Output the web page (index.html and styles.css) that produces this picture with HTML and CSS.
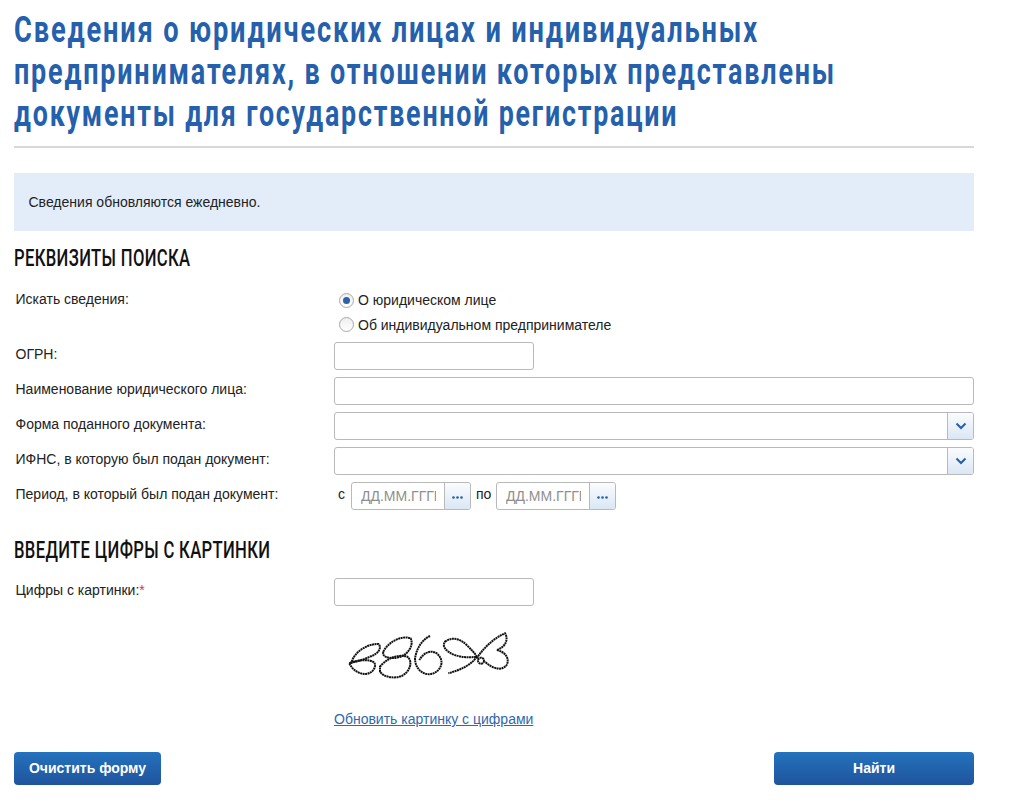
FILE: index.html
```html
<!DOCTYPE html>
<html lang="ru">
<head>
<meta charset="utf-8">
<title>Сведения о юридических лицах</title>
<link rel="stylesheet" href="styles.css">
</head>
<body>
<main class="page">
  <h1 class="title">
    <span class="title-line">Сведения о юридических лицах и индивидуальных</span>
    <span class="title-line title-line-2">предпринимателях, в отношении которых представлены</span>
    <span class="title-line title-line-3">документы для государственной регистрации</span>
  </h1>
  <div class="notice">Сведения обновляются ежедневно.</div>
  <h2 class="section section-first"><span class="section-text">Реквизиты поиска</span></h2>
  <form class="form">
    <div class="row row-radio">
      <div class="label">Искать сведения:</div>
      <div class="radios">
        <div class="radio-line"><span class="radio radio-on"></span>О юридическом лице</div>
        <div class="radio-line"><span class="radio"></span>Об индивидуальном предпринимателе</div>
      </div>
    </div>
    <div class="row">
      <div class="label">ОГРН:</div>
      <div class="field field-short"></div>
    </div>
    <div class="row">
      <div class="label">Наименование юридического лица:</div>
      <div class="field"></div>
    </div>
    <div class="row">
      <div class="label">Форма поданного документа:</div>
      <div class="field field-select"><span class="addon addon-select"><svg class="chev" viewBox="0 0 12 8"><path d="M1.500 1.500 6 6l4.500-4.500"/></svg></span></div>
    </div>
    <div class="row">
      <div class="label">ИФНС, в которую был подан документ:</div>
      <div class="field field-select"><span class="addon addon-select"><svg class="chev" viewBox="0 0 12 8"><path d="M1.500 1.500 6 6l4.500-4.500"/></svg></span></div>
    </div>
    <div class="row">
      <div class="label">Период, в который был подан документ:</div>
      <div class="dates">
        <span class="date-word date-from">с</span>
        <div class="field field-date"><input class="date-input" type="text" placeholder="ДД.ММ.ГГГГ"><span class="addon addon-date"><svg class="dots" viewBox="0 0 11 3"><circle cx="1.500" cy="1.500" r="1.300"/><circle cx="5.500" cy="1.500" r="1.300"/><circle cx="9.500" cy="1.500" r="1.300"/></svg></span></div>
        <span class="date-word date-to">по</span>
        <div class="field field-date"><input class="date-input" type="text" placeholder="ДД.ММ.ГГГГ"><span class="addon addon-date"><svg class="dots" viewBox="0 0 11 3"><circle cx="1.500" cy="1.500" r="1.300"/><circle cx="5.500" cy="1.500" r="1.300"/><circle cx="9.500" cy="1.500" r="1.300"/></svg></span></div>
      </div>
    </div>
    <h2 class="section section-second"><span class="section-text">Введите цифры с картинки</span></h2>
    <div class="row">
      <div class="label">Цифры с картинки:<span class="req">*</span></div>
      <div class="field field-short"></div>
    </div>
    <svg class="captcha" viewBox="0 0 720 255" width="240" height="85">
      <g class="captcha-ink">
        <path d="M95 125C105 95 140 72 175 72 185 80 180 100 150 110 125 122 105 125 88 130"/>
        <path d="M88 130C105 165 145 170 160 150 170 135 165 125 150 122 130 118 105 122 88 130"/>
        <path d="M190 95C205 65 245 45 272 55 282 75 265 105 235 112 205 118 185 110 190 95Z"/>
        <path d="M180 140C195 120 230 100 262 110 280 125 270 155 245 168 220 178 190 170 180 155Z"/>
        <path d="M330 48C305 60 290 85 285 115 285 150 315 170 340 160 365 150 375 120 350 100 330 88 310 100 298 120"/>
        <path d="M375 65C395 50 420 55 440 75 455 90 465 100 470 110 440 115 405 110 385 95 372 85 368 75 375 65Z"/>
        <path d="M470 110C455 135 420 150 385 160"/>
        <path d="M470 115C490 85 520 55 555 40 565 55 560 80 530 90 555 95 570 115 560 135 545 155 515 145 495 125"/>
        <circle cx="483" cy="122" r="9"/>
      </g>
    </svg>
    <div class="refresh"><a class="refresh-link" href="#">Обновить картинку с цифрами</a></div>
    <div class="actions">
      <button class="btn btn-clear" type="button">Очистить форму</button>
      <button class="btn btn-find" type="button">Найти</button>
    </div>
  </form>
</main>
</body>
</html>
```
FILE: styles.css
```css
* { box-sizing: border-box; }
html, body { margin: 0; padding: 0; background: #fff; }
body {
  font-family: "Liberation Sans", Arial, sans-serif;
  font-size: 14px;
  color: #222;
  height: 803px;
  overflow: hidden;
}
.page { width: 974px; padding: 9px 0 0 14px; }
.title {
  margin: 0;
  padding: 0 0 11px;
  border-bottom: 2px solid #d8d8d8;
  font-family: Roboto, "Liberation Sans", sans-serif;
  font-weight: 700;
  font-size: 37px;
  line-height: 42px;
  letter-spacing: 2.500px;
  color: #2460ab;
}
.title-line {
  display: block;
  white-space: nowrap;
  transform: scaleX(0.736);
  transform-origin: left center;
}
.title-line-2 { transform: scaleX(0.729); }
.title-line-3 { transform: scaleX(0.724); }
.notice {
  margin-top: 25px;
  height: 58px;
  padding: 0 14.500px;
  line-height: 58px;
  background: #e3edf9;
  font-size: 14px;
}
.section {
  margin: 0;
  font-family: Roboto, "Liberation Sans", sans-serif;
  font-weight: 500;
  font-size: 24px;
  line-height: 28px;
  letter-spacing: 0.500px;
  text-transform: uppercase;
  color: #111;
}
.section-text {
  display: block;
  white-space: nowrap;
  transform: scaleX(0.693);
  transform-origin: left center;
}
.section-first { margin-top: 13px; height: 30px; }
.section-second { margin-top: 26px; height: 42px; }
.row { display: flex; margin-bottom: 7px; min-height: 28px; }
.row-radio { margin-top: 13px; margin-bottom: 5px; }
.label { width: 320px; padding: 4px 0 0 1.500px; line-height: 16px; font-size: 14px; }
.req { color: #d33; }
.radios { padding: 1px 0 0 4.500px; }
.radio-line { display: flex; align-items: center; height: 24.500px; }
.radio {
  width: 15px;
  height: 15px;
  margin-right: 4.500px;
  border: 1px solid #a9a9a9;
  border-radius: 50%;
  background: linear-gradient(#eee, #fff);
  display: flex;
  align-items: center;
  justify-content: center;
}
.radio-on::after {
  content: "";
  width: 7px;
  height: 7px;
  border-radius: 50%;
  background: #2a62ac;
}
.field {
  position: relative;
  height: 28px;
  flex: 1;
  border: 1px solid #b9b9b9;
  border-radius: 3px;
  background: #fff;
}
.field-short { flex: 0 0 200px; }
.addon {
  display: flex;
  align-items: center;
  justify-content: center;
  position: absolute;
  top: 0;
  right: 0;
  bottom: 0;
  border-left: 1px solid #b9b9b9;
  border-radius: 0 2px 2px 0;
  background: linear-gradient(#fafcfe, #dbe7f5);
}
.addon-select { width: 26px; }
.chev { width: 12px; height: 8px; fill: none; stroke: #2460ab; stroke-width: 2; }
.dates { display: flex; align-items: flex-start; flex: 1; }
.date-word { font-size: 14px; line-height: 16px; padding-top: 4px; }
.date-from { width: 17px; padding-left: 4px; }
.date-to { width: 25px; padding-left: 5px; }
.field-date { flex: 0 0 120px; overflow: hidden; }
.date-input {
  display: block;
  width: 92px;
  height: 26px;
  margin: 0;
  padding: 0 8px 0 9px;
  border: 0;
  outline: 0;
  background: transparent;
  font-family: "Liberation Sans", Arial, sans-serif;
  font-size: 14px;
}
.date-input::placeholder { color: #8f8f8f; opacity: 1; }
.addon-date { width: 26px; }
.dots { width: 11px; height: 3px; margin-top: 2px; fill: #2460ab; }
.captcha { display: block; margin: 14px 0 0 306px; }
.captcha-ink {
  fill: none;
  stroke: #111;
  stroke-width: 6;
  stroke-dasharray: 6 1.500;
}
.refresh { padding-left: 320px; margin-top: 6px; height: 16px; line-height: 16px; }
.refresh-link { color: #2f68ad; font-size: 14px; text-decoration: underline; }
.actions { display: flex; justify-content: space-between; margin-top: 25px; }
.btn {
  height: 33px;
  padding: 0 0 1px;
  border: 0;
  border-radius: 4px;
  background: linear-gradient(#2472bd, #1f549c);
  color: #fff;
  font-family: "Liberation Sans", Arial, sans-serif;
  font-weight: 700;
  font-size: 14px;
}
.btn-clear { width: 147px; }
.btn-find { width: 200px; }
```
